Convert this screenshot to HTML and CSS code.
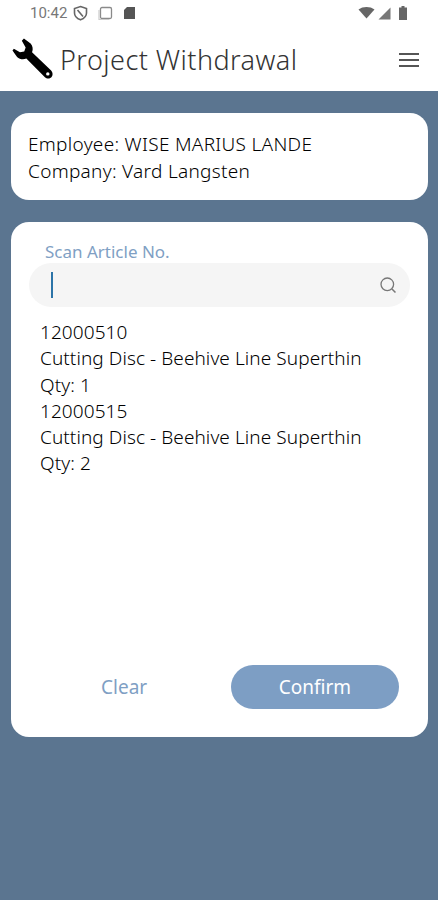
FILE: index.html
```html
<!DOCTYPE html>
<html lang="en">
<head>
    <meta charset="UTF-8">
    <meta name="viewport" content="width=device-width, initial-scale=1.0">
    <title>Project Withdrawal</title>
    <link rel="stylesheet" href="styles.css">
</head>
<body>
    <div class="statusbar">
        <div class="status-left">
            <span class="clock">10:42</span>
            <svg width="15" height="16" viewBox="0 0 15 16"><path d="M7.500 1.500 13.500 3.500V8C13.500 11.200 11 13.500 7.500 14.800 4 13.500 1.500 11.200 1.500 8V3.500Z" fill="none" stroke="#666" stroke-width="1.600"/><path d="M4.500 5 10 11.500" stroke="#666" stroke-width="1.600"/></svg>
            <svg class="status-gap" width="15" height="15" viewBox="0 0 15 15"><rect x="2.500" y="1.500" width="11" height="11" rx="1.500" fill="none" stroke="#8a8a8a" stroke-width="1.300"/><path d="M1 4V13.500H11" fill="none" stroke="#ccc" stroke-width="1.200"/></svg>
            <svg class="status-gap" width="13" height="14" viewBox="0 0 13 14"><path d="M4 1H12V13H1V4Z" fill="#555"/></svg>
        </div>
        <div class="status-right">
            <svg width="17" height="12" viewBox="0 0 17 12"><path d="M0.500 2.500C5 -0.800 12 -0.800 16.500 2.500L8.500 11.500Z" fill="#666"/></svg>
            <svg width="13" height="13" viewBox="0 0 13 13"><path d="M12.500 0.500V12.500H0.500Z" fill="#777"/></svg>
            <svg class="status-batt" width="8" height="14" viewBox="0 0 8 14"><path d="M2.500 0H5.500V1.500H8V14H0V1.500H2.500Z" fill="#666"/></svg>
        </div>
    </div>

    <header class="appbar">
        <svg class="wrench" width="42" height="42" viewBox="0 0 44 44">
            <path d="M12.500 0.500 19.500 5.800C21.800 8.500 22.300 12 21 15L41 34C43 36.300 43 39.200 41.300 41 39.300 43 36.300 42.800 34.500 41L15 21.500C11.800 23 8 22.300 5.300 19.800L0.500 13 2 11.300 8.300 15 12.800 14.200 14.300 10 10.300 3Z" fill="#000"/>
            <circle cx="37.500" cy="37.600" r="1.800" fill="#fff"/>
        </svg>
        <h1 class="title">Project Withdrawal</h1>
        <button class="menu-btn" aria-label="Menu">
            <span></span><span></span><span></span>
        </button>
    </header>

    <main class="content">
        <section class="card card-info">
            <div>Employee: WISE MARIUS LANDE</div>
            <div>Company: Vard Langsten</div>
        </section>

        <section class="card card-scan">
            <label class="scan-label" for="scan">Scan Article No.</label>
            <div class="search">
                <span class="caret"></span>
                <svg class="search-icon" width="18" height="18" viewBox="0 0 18 18"><circle cx="8.300" cy="8.300" r="6.300" fill="none" stroke="#777" stroke-width="1.300"/><path d="M13 13 16.500 16.500" stroke="#777" stroke-width="1.500"/></svg>
            </div>
            <ul class="articles">
                <li>
                    <div>12000510</div>
                    <div>Cutting Disc - Beehive Line Superthin</div>
                    <div>Qty: 1</div>
                </li>
                <li>
                    <div>12000515</div>
                    <div>Cutting Disc - Beehive Line Superthin</div>
                    <div>Qty: 2</div>
                </li>
            </ul>
            <div class="actions">
                <button class="btn-clear">Clear</button>
                <button class="btn-confirm">Confirm</button>
            </div>
        </section>
    </main>
</body>
</html>
```

FILE: styles.css
```css
html, body {
    height: 100%;
}
body {
    margin: 0;
    background: #5b7590;
    color: #000;
    font-family: "Noto Sans", sans-serif;
    font-size: 19px;
    font-weight: 300;
}
.statusbar {
    height: 28px;
    background: #fff;
    display: flex;
    justify-content: space-between;
    align-items: center;
    padding: 0 31px 2px 30px;
    box-sizing: border-box;
}
.status-left, .status-right {
    display: flex;
    align-items: center;
    gap: 3px;
}
.clock {
    font-family: Roboto, sans-serif;
    font-size: 15px;
    font-weight: 400;
    color: #777;
    margin-right: 3px;
}
.status-gap {
    margin-left: 7px;
}
.status-batt {
    margin-left: 5px;
}
.appbar {
    height: 63px;
    background: #fff;
    display: flex;
    align-items: center;
    padding: 0 19px 0 12px;
    box-sizing: border-box;
}
.wrench {
    flex: none;
    margin-top: -2px;
}
.title {
    flex: 1;
    margin: 0 0 0 6px;
    font-size: 27px;
    font-weight: 300;
    color: #333;
    letter-spacing: 0.45px;
}
.menu-btn {
    border: none;
    background: none;
    padding: 0;
    width: 20px;
    display: flex;
    flex-direction: column;
    gap: 4px;
}
.menu-btn span {
    display: block;
    height: 2px;
    background: #555;
}
.content {
    padding: 22px 10px 22px 11px;
    display: flex;
    flex-direction: column;
    gap: 22px;
}
.card {
    background: #fff;
    border-radius: 18px;
}
.card-info {
    height: 87px;
    box-sizing: border-box;
    padding: 18px 17px;
    line-height: 27px;
    letter-spacing: 0.3px;
}
.card-scan {
    height: 515px;
    box-sizing: border-box;
    padding: 19px 18px 28px;
    display: flex;
    flex-direction: column;
}
.scan-label {
    margin-left: 16px;
    font-size: 17px;
    font-weight: 400;
    line-height: 22px;
    color: #7f9fc4;
}
.search {
    height: 44px;
    border-radius: 22px;
    background: #f5f5f5;
    display: flex;
    align-items: center;
    justify-content: space-between;
    padding: 0 13px 0 22px;
}
.caret {
    width: 2px;
    height: 26px;
    background: #2c74a8;
}
.articles {
    list-style: none;
    margin: 12px 0 0;
    padding: 0 0 0 11px;
    line-height: 26.300px;
    letter-spacing: 0.08px;
    flex: 1;
}
.actions {
    display: flex;
    align-items: center;
    justify-content: space-between;
    padding-right: 11px;
}
.actions button {
    border: none;
    font-family: inherit;
    font-size: 19px;
    font-weight: 400;
}
.btn-clear {
    background: none;
    color: #7f9fc4;
    margin-left: 72px;
    padding: 0;
}
.btn-confirm {
    width: 168px;
    height: 44px;
    border-radius: 22px;
    background: #7d9ec4;
    color: #fff;
}
```
